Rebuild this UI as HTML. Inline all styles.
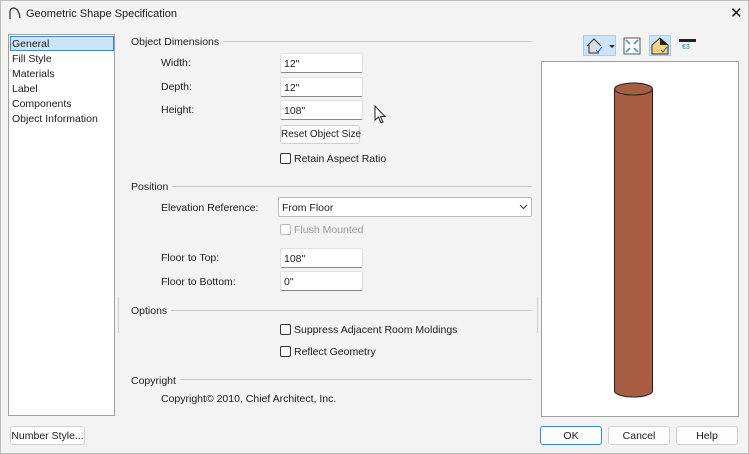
<!DOCTYPE html>
<html><head><style>
*{box-sizing:border-box;margin:0;padding:0}
body{width:749px;height:454px;background:#f3f3f3;font-family:"Liberation Sans",sans-serif;font-size:10.5px;color:#1a1a1a;position:relative;overflow:hidden;border:1px solid #bdbdbd}
.a{position:absolute;white-space:nowrap}
.in{position:absolute;background:#fff;border:1px solid #e0e0e0;border-bottom:1px solid #8a8a8a;height:20px;padding:4px 0 0 3px;border-radius:2px;white-space:nowrap}
.btn{position:absolute;background:#fdfdfd;border:1px solid #d0d0d0;border-radius:3px;height:19px;text-align:center;padding-top:3px;white-space:nowrap;font-size:10.5px}
.hr{position:absolute;height:1px;background:#c8c8c8}
.h{position:absolute;white-space:nowrap;background:#f3f3f3;padding-right:4px}
.cb{position:absolute;width:11px;height:11px;border:1px solid #333;border-radius:2px;background:#fff}
</style></head><body>
<svg class="a" style="left:7px;top:5px" width="14" height="14"><path d="M2 13 V6 Q2 2 6 2 Q11 3 12 12" fill="none" stroke="#333" stroke-width="1.3"/></svg>
<div class="a" style="left:25px;top:7px;font-size:11px">Geometric Shape Specification</div>
<div class="a" style="left:729px;top:3px;font-size:15px">✕</div>
<div class="a" style="left:7px;top:33px;width:107px;height:382px;background:#fff;border:1px solid #a0a0a0"></div>
<div class="a" style="left:9px;top:35px;width:104px;height:15px;background:#cce4f7;border:1px solid #3c87c8"></div>
<div class="a" style="left:11px;top:37px">General</div>
<div class="a" style="left:11px;top:52px">Fill Style</div>
<div class="a" style="left:11px;top:67px">Materials</div>
<div class="a" style="left:11px;top:82px">Label</div>
<div class="a" style="left:11px;top:97px">Components</div>
<div class="a" style="left:11px;top:112px">Object Information</div>

<div class="hr" style="left:130px;top:40px;width:401px"></div><div class="h" style="left:130px;top:35px">Object Dimensions</div>
<div class="a" style="left:160px;top:56px">Width:</div><div class="in" style="left:279px;top:52px;width:83px">12"</div>
<div class="a" style="left:160px;top:80px">Depth:</div><div class="in" style="left:279px;top:76px;width:83px">12"</div>
<div class="a" style="left:160px;top:103px">Height:</div><div class="in" style="left:279px;top:99px;width:83px">108"</div>
<svg class="a" style="left:373px;top:104px" width="14" height="20"><path d="M1 1 V15 L4.5 12 L7 18 L9 17 L6.5 11.5 L11 11.5 Z" fill="#fff" stroke="#222"/></svg>
<div class="btn" style="left:279px;top:124px;width:80px;font-size:10px">Reset Object Size</div>
<div class="cb" style="left:279px;top:152px"></div><div class="a" style="left:293px;top:152px">Retain Aspect Ratio</div>

<div class="hr" style="left:130px;top:185px;width:401px"></div><div class="h" style="left:130px;top:180px">Position</div>
<div class="a" style="left:160px;top:201px">Elevation Reference:</div>
<div class="in" style="left:277px;top:196px;width:254px;height:20px;border:1px solid #bbb">From Floor</div>
<svg class="a" style="left:518px;top:203px" width="9" height="6"><path d="M1 1 L4.5 4.5 L8 1" fill="none" stroke="#333"/></svg>
<div class="cb" style="left:279px;top:223px;border-color:#bbb"></div><div class="a" style="left:293px;top:223px;color:#999">Flush Mounted</div>
<div class="a" style="left:160px;top:251px">Floor to Top:</div><div class="in" style="left:279px;top:247px;width:83px">108"</div>
<div class="a" style="left:160px;top:275px">Floor to Bottom:</div><div class="in" style="left:279px;top:270px;width:83px">0"</div>

<div class="hr" style="left:130px;top:309px;width:401px"></div><div class="h" style="left:130px;top:304px">Options</div>
<div class="cb" style="left:279px;top:323px"></div><div class="a" style="left:293px;top:323px">Suppress Adjacent Room Moldings</div>
<div class="cb" style="left:279px;top:345px"></div><div class="a" style="left:293px;top:345px">Reflect Geometry</div>
<div class="hr" style="left:130px;top:378px;width:401px"></div><div class="h" style="left:130px;top:374px">Copyright</div>
<div class="a" style="left:160px;top:392px">Copyright© 2010, Chief Architect, Inc.</div>
<div class="a" style="left:117px;top:296px;width:1px;height:36px;background:#ccc"></div>
<div class="a" style="left:536px;top:296px;width:1px;height:36px;background:#ccc"></div>

<div class="a" style="left:582px;top:34px;width:33px;height:21px;background:#cce4f7;border:1px solid #a8cbe8"></div>
<svg class="a" style="left:584px;top:35px" width="30" height="20"><path d="M2 10 L9 3 L16 10 M4 9 V17 H14" fill="#ddd" stroke="#333"/><path d="M11 14 L13 16 L17 11" stroke="#3350c0" fill="none"/><path d="M24 9 L30 9 L27 12Z" fill="#222"/></svg>
<svg class="a" style="left:621px;top:35px" width="20" height="20"><rect x="2" y="2" width="16" height="16" fill="#fff" stroke="#555"/><path d="M4 4 L8 8 M16 4 L12 8 M4 16 L8 12 M16 16 L12 12" stroke="#2a8bb0" stroke-width="1.5"/></svg>
<div class="a" style="left:648px;top:34px;width:22px;height:21px;background:#cce4f7;border:1px solid #a8cbe8"></div>
<svg class="a" style="left:649px;top:35px" width="20" height="20"><path d="M2 9 L10 2 L18 9 V18 H2Z" fill="#f2d27a" stroke="#333"/><path d="M10 2 L18 9 H10Z" fill="#222"/><path d="M11 14 L13 16 L17 11" stroke="#3350c0" fill="none"/></svg>
<div class="a" style="left:678px;top:38px;width:17px;height:3px;background:#222"></div>
<div class="a" style="left:681px;top:43px;font-size:7px;color:#2a8bb0">€3</div>
<div class="a" style="left:540px;top:60px;width:198px;height:356px;background:#fff;border:1px solid #a0a0a0"></div>
<svg class="a" style="left:609px;top:78px" width="50" height="322"><path d="M4.5 10 V312 A19 6 0 0 0 42.5 312 V10Z" fill="#a95d42" stroke="#222"/><ellipse cx="23.5" cy="10" rx="19" ry="6" fill="#a95d42" stroke="#222"/></svg>

<div class="btn" style="left:9px;top:425px;width:75px">Number Style...</div>
<div class="btn" style="left:539px;top:425px;width:62px;border:1px solid #3c87c8">OK</div>
<div class="btn" style="left:607px;top:425px;width:62px">Cancel</div>
<div class="btn" style="left:675px;top:425px;width:62px">Help</div>
</body></html>
